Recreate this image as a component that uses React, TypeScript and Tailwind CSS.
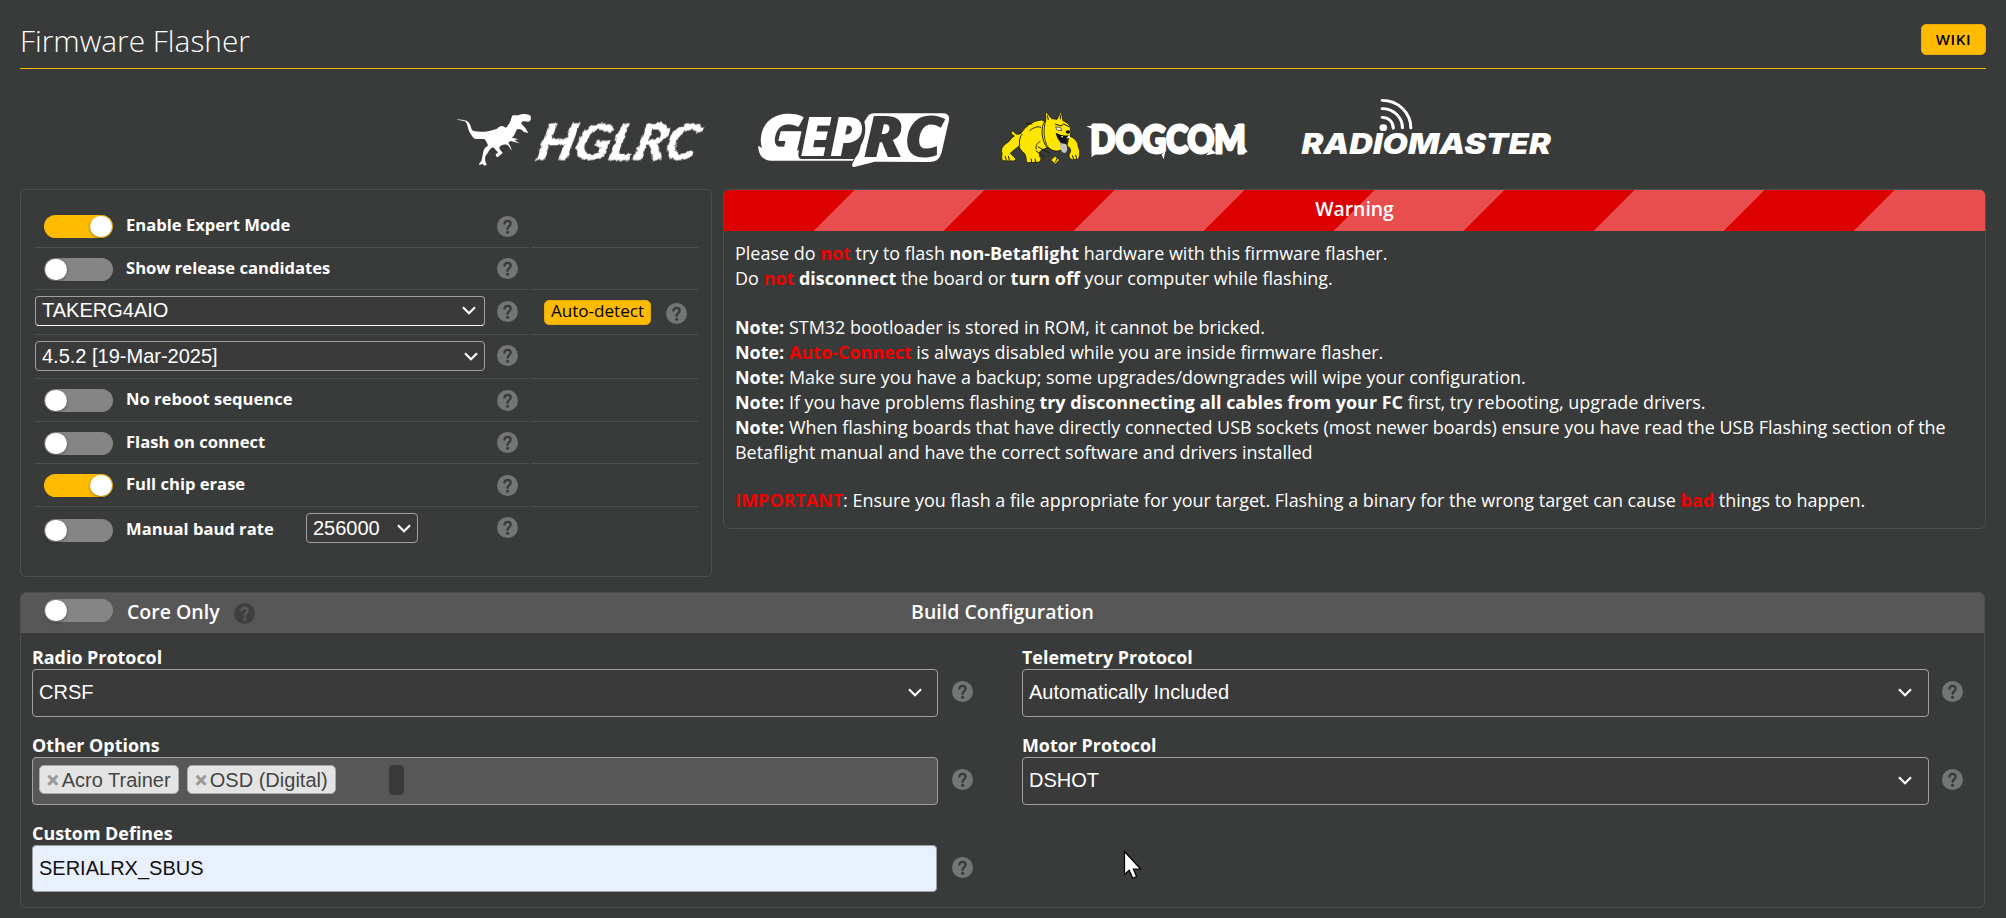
import type { ReactNode } from "react";

const sans = "font-['Open_Sans',sans-serif]";
const arial = "font-['Liberation_Sans',Arial,sans-serif]";

function Help({ className = "", dark = false }: { className?: string; dark?: boolean }) {
  const bg = dark ? "#3f3f3f" : "#747674";
  const fg = dark ? "#5b5b5b" : "#393b3a";
  return (
    <svg className={`h-[21px] w-[21px] shrink-0 ${className}`} viewBox="0 0 63 63">
      <circle cx="31.5" cy="31.5" r="31.5" fill={bg} />
      <path
        d="M22.5 22.5C23.5 16.5 27 14.5 31.5 14.5C37 14.5 41 18 41 23C41 30.5 31.8 30.5 31.8 38.5"
        fill="none"
        stroke={fg}
        strokeWidth="7"
        strokeLinecap="round"
      />
      <circle cx="31.8" cy="48.5" r="4.6" fill={fg} />
    </svg>
  );
}

function Toggle({ on = false, className = "" }: { on?: boolean; className?: string }) {
  return (
    <div
      className={`flex h-[23px] w-[69px] shrink-0 items-center rounded-full px-px ${
        on ? "justify-end bg-[#ffbb00]" : "justify-start bg-[#858585]"
      } ${className}`}
    >
      <div className="h-[21px] w-[22px] rounded-full bg-white shadow-[0_1px_3px_rgba(0,0,0,0.4)]" />
    </div>
  );
}

function Chevron() {
  return (
    <svg className="h-[9px] w-[14px] shrink-0" viewBox="0 0 14 9">
      <path d="M1 1.2L7 7.2L13 1.2" fill="none" stroke="#fff" strokeWidth="2.2" />
    </svg>
  );
}

function Select({ value, className = "" }: { value: string; className?: string }) {
  return (
    <div
      className={`flex items-center justify-between rounded-[4px] border border-[#a0a0a0] bg-[#3a3a3a] pl-[6px] text-[20px] leading-[24px] text-white ${arial} ${className}`}
    >
      <span>{value}</span>
      <Chevron />
    </div>
  );
}

function Row({
  height,
  last = false,
  children,
  side,
}: {
  height: string;
  last?: boolean;
  children: ReactNode;
  side?: ReactNode;
}) {
  const line = last ? "" : "border-b border-[#4d4f4e]";
  return (
    <div className={`flex gap-[3px] ${height}`}>
      <div className={`flex w-[494px] items-start ${line}`}>{children}</div>
      <div className={`flex w-[166px] items-start ${line}`}>{side}</div>
    </div>
  );
}

function ToggleRow({
  label,
  on,
  height,
  help,
}: {
  label: string;
  on?: boolean;
  height: string;
  help: string;
}) {
  return (
    <Row height={height}>
      <Toggle on={on} className="mt-[10px] ml-[9px]" />
      <span className="mt-[8px] ml-[13px] flex-1 text-[16.6px] leading-[24px] font-bold">{label}</span>
      <Help className={`mr-[11px] ${help}`} />
    </Row>
  );
}

function Field({ label, helpGap = "ml-[14px]", children }: { label: string; helpGap?: string; children: ReactNode }) {
  return (
    <div className="h-[88px]">
      <div className="h-[24px] text-[17.9px] leading-[24px] font-bold">{label}</div>
      <div className="flex items-start">
        {children}
        <Help className={`mt-[12px] ${helpGap}`} />
      </div>
    </div>
  );
}

function Tag({ children }: { children: ReactNode }) {
  return (
    <span className="flex h-[29px] items-center rounded-[5px] border border-[#aaa] bg-[#e4e4e4] pr-[7.5px] pl-[7px] text-[20px] leading-[24px] text-[#444]">
      <b className="mr-[3px] text-[#999] [-webkit-text-stroke:0.6px_#999]">×</b>
      {children}
    </span>
  );
}

function Red({ children }: { children: ReactNode }) {
  return <b className="font-bold text-[#f00000]">{children}</b>;
}

function LogoHglrc() {
  return (
    <svg className="h-[100px] w-[280px]" viewBox="0 0 813 300" preserveAspectRatio="none" fill="#fff">
      <defs>
        <filter id="brush" x="-5%" y="-10%" width="110%" height="120%">
          <feTurbulence type="fractalNoise" baseFrequency="0.09 0.05" numOctaves="2" seed="7" />
          <feDisplacementMap in="SourceGraphic" scale="14" xChannelSelector="R" yChannelSelector="G" />
        </filter>
      </defs>
      <path d="M48 104C62 103 76 104 84 113C93 126 88 134 98 138C120 144 145 138 166 131C172 124 180 121 186 125C192 130 194 128 197 121C204 114 206 104 209 93C214 89 222 93 230 90C240 85 258 86 263 93C265 101 264 107 258 110L242 109C236 111 234 114 239 119C247 127 253 135 256 144L244 141C236 131 226 129 222 135C218 146 215 152 209 158L228 163L216 165L231 175L205 168L198 173C203 180 207 187 208 197L199 183C191 176 184 179 176 183C170 187 171 191 182 203C178 209 172 211 167 217C164 216 161 211 162 208L169 202C160 195 158 188 153 187C147 190 142 197 139 203L132 213C130 222 131 230 136 239L129 242L124 237L113 240C114 232 119 232 121 225C124 212 125 202 128 193C132 186 141 184 139 180C137 174 134 168 129 162L104 162C95 161 91 149 86 142C79 126 80 107 66 107Z" />
      <text
        transform="translate(274 224) skewX(-14)"
        fontFamily="Lato, sans-serif"
        fontSize="150"
        fontWeight="700"
        fontStyle="italic"
        stroke="#fff"
        strokeWidth="3"
        textLength="464"
        lengthAdjust="spacingAndGlyphs"
        filter="url(#brush)"
      >
        HGLRC
      </text>
    </svg>
  );
}

function LogoGeprc() {
  return (
    <svg className="h-[100px] w-[220px]" viewBox="871 0 639 300" preserveAspectRatio="none">
      <path
        d="M924 182C924 212 940 227 962 227L1204 227L1210 222L1048 222C1038 219 1040 206 1042 196L960 204Z"
        fill="#fff"
      />
      <text
        transform="translate(924 212) scale(.98 1)"
        fontFamily="'Open Sans', sans-serif"
        fontSize="170"
        fontWeight="800"
        fontStyle="italic"
        fill="#fff"
        stroke="#fff"
        strokeWidth="4"
        strokeLinejoin="round"
        textLength="134"
        lengthAdjust="spacingAndGlyphs"
      >
        G
      </text>
      <text
        transform="translate(1047 213) scale(.98 1)"
        fontFamily="'Open Sans', sans-serif"
        fontSize="162"
        fontWeight="800"
        fontStyle="italic"
        fill="#fff"
        stroke="#393b3a"
        strokeWidth="9"
        paintOrder="stroke"
        textLength="184"
        lengthAdjust="spacingAndGlyphs"
      >
        EP
      </text>
      <path
        d="M1240 97Q1246 85 1262 85L1464 85Q1481 88 1478 106L1456 205Q1449 230 1424 231L1262 230C1240 236 1222 240 1203 246Q1195 247 1197 237L1206 218C1216 208 1219 196 1222 180C1235 158 1238 130 1232 110Z"
        fill="#fff"
        stroke="#393b3a"
        strokeWidth="4"
        paintOrder="stroke"
      />
      <text
        transform="translate(1230 217) scale(1.04 1)"
        fontFamily="'Open Sans', sans-serif"
        fontSize="168"
        fontWeight="800"
        fontStyle="italic"
        fill="#393b3a"
        textLength="222"
        lengthAdjust="spacingAndGlyphs"
      >
        RC
      </text>
    </svg>
  );
}

function LogoDogcom() {
  return (
    <svg className="h-[100px] w-[260px]" viewBox="0 -45 780 300" preserveAspectRatio="none">
      <g fill="#ffe600" stroke="#1c1c10" strokeWidth="2.5" strokeLinejoin="round">
        <path d="M48 95C54 92 58 94 60 99C64 104 72 104 78 100C90 82 110 62 140 60L160 70L165 140L140 150C128 158 134 170 138 176C138 182 134 187 128 187L96 188C92 180 96 172 88 160C80 154 74 146 72 138C64 146 52 152 46 160C52 168 62 172 63 180L56 183L24 182C18 178 20 168 21 160C16 146 24 136 40 126C48 118 50 112 58 108C52 106 48 100 48 95Z" />
        <path d="M222 108C238 112 250 126 250 142C256 152 255 166 250 178L232 179C222 176 220 168 224 160C230 152 226 142 216 138Z" />
        <path d="M152 62L152 34L170 56L186 58L198 33L204 62C218 68 228 78 226 90C230 96 226 108 220 112L204 118L196 128L202 146C190 158 172 154 160 142C146 124 144 90 152 62Z" />
        <path d="M180 169L193 180L181 192L168 180Z" strokeWidth="1.5" />
      </g>
      <path d="M182 98C194 104 210 110 222 104L216 122L212 136L200 132C192 122 184 112 182 98Z" fill="#111" />
      <path d="M196 126C202 134 208 128 214 134C218 144 218 154 210 159C202 160 198 152 196 144Z" fill="#c4c4c4" />
      <path d="M182 80L198 84L200 92L186 90Z" fill="#fff" stroke="#222" strokeWidth="2" />
      <path d="M198 108L204 108L202 114ZM214 116L222 104L226 112Z" fill="#fff" />
      <ellipse cx="219" cy="96" rx="7" ry="5" fill="#111" />
      <path
        d="M150 64C136 80 138 120 158 146M82 102C74 110 72 124 74 138M104 92C116 82 128 78 138 82M124 148C120 136 128 128 136 124M128 140L164 160M122 152L150 172M180 72L198 78L206 72L222 80M157 46L160 60M196 44L196 58M186 175L181 187M30 168L34 180M40 168L43 180M108 176L110 187M120 176L122 187M232 166L236 178M242 164L245 177M92 70L112 72"
        fill="none"
        stroke="#1c1c10"
        strokeWidth="3"
      />
      <g fill="#fff">
        <path d="M274 79L312 74L314 88L298 90Z" />
        <path d="M289 172L294 146L312 156Z" />
        <path d="M500 164L512 150L506 178Z" />
        <path d="M652 86L676 74L674 92Z" />
        <path d="M716 76L745 71L736 90Z" />
        <path d="M634 166L648 146L664 160Z" />
        <path d="M730 164L748 140L758 156Z" />
      </g>
      <text
        transform="translate(286 159) scale(.9 1)"
        fontFamily="Lato, sans-serif"
        fontSize="115"
        fontWeight="900"
        fill="#fff"
        stroke="#fff"
        strokeWidth="9"
        strokeLinejoin="round"
        textLength="518"
        lengthAdjust="spacingAndGlyphs"
      >
        DOGCOM
      </text>
    </svg>
  );
}

function LogoRadiomaster() {
  return (
    <svg className="h-[100px] w-[270px]" viewBox="810 0 706 300" preserveAspectRatio="none">
      <g fill="none" stroke="#fff" strokeWidth="8" strokeLinecap="round">
        <path d="M1051 46C1092 46 1126 82 1126 129" />
        <path d="M1051 71C1080 71 1104 96 1104 129" />
        <path d="M1051 97C1068 97 1080 110 1080 130" />
      </g>
      <circle cx="1054" cy="128" r="10" fill="#fff" />
      <text
        x="840"
        y="206"
        fontFamily="Inter, sans-serif"
        fontSize="85"
        fontWeight="900"
        fontStyle="italic"
        fill="#fff"
        textLength="652"
        lengthAdjust="spacingAndGlyphs"
      >
        RADIOMASTER
      </text>
    </svg>
  );
}

export default function App() {
  return (
    <div className={`relative h-[918px] w-[2006px] overflow-hidden bg-[#393b3a] pr-[20px] pl-[20px] text-white ${sans}`}>
      <header className="flex h-[69px] items-start justify-between border-b border-[#ffbb00]">
        <h1 className="mt-[20px] text-[29.85px] leading-[42px] font-light">Firmware Flasher</h1>
        <button className="mt-[24px] flex h-[31px] w-[65px] items-center justify-center rounded-[5px] border border-[#e8ac08] bg-[#ffbb00] pb-[1px] text-[15px] leading-[20px] font-semibold tracking-[0.6px] text-black">
          WIKI
        </button>
      </header>

      <div className="mt-[16px] flex h-[100px]">
        <div className="ml-[420px]">
          <LogoHglrc />
        </div>
        <div className="ml-[20px]">
          <LogoGeprc />
        </div>
        <div className="ml-[35px]">
          <LogoDogcom />
        </div>
        <div className="ml-[35px]">
          <LogoRadiomaster />
        </div>
      </div>

      <div className="mt-[4px] flex items-start gap-[11px]">
        <section className="h-[388px] w-[692px] rounded-[6px] border border-[#4d4f4e] pt-[15px] pl-[14px]">
          <ToggleRow label="Enable Expert Mode" on height="h-[43px]" help="mt-[11px]" />
          <ToggleRow label="Show release candidates" height="h-[42px]" help="mt-[10px]" />
          <Row
            height="h-[45px]"
            side={
              <>
                <button className="mt-[10px] ml-[12px] flex h-[25px] w-[107px] items-center justify-center rounded-[5px] border border-[#e8ac08] bg-[#ffbb00] pb-[4px] text-[17.1px] leading-[20px] text-black">
                  Auto-detect
                </button>
                <Help className="mt-[13px] ml-[15px]" />
              </>
            }
          >
            <Select value="TAKERG4AIO" className="mt-[6px] h-[30px] w-[450px] border-b-white pr-[8px] pb-[2px]" />
            <Help className="mt-[11px] ml-[12px]" />
          </Row>
          <Row height="h-[44px]">
            <Select value="4.5.2 [19-Mar-2025]" className="mt-[6px] h-[30px] w-[450px] pr-[6px]" />
            <Help className="mt-[10px] ml-[12px]" />
          </Row>
          <ToggleRow label="No reboot sequence" height="h-[43px]" help="mt-[11px]" />
          <ToggleRow label="Flash on connect" height="h-[42px]" help="mt-[10px]" />
          <ToggleRow label="Full chip erase" on height="h-[43px]" help="mt-[11px]" />
          <Row height="h-[45px]" last>
            <Toggle className="mt-[12px] ml-[9px]" />
            <span className="mt-[10px] ml-[13px] w-[180px] text-[16.6px] leading-[24px] font-bold">Manual baud rate</span>
            <Select value="256000" className="mt-[6px] h-[30px] w-[112px] pr-[6px]" />
            <Help className="mt-[10px] ml-[79px]" />
          </Row>
        </section>

        <section className="h-[340px] w-[1263px] overflow-hidden rounded-[6px] border border-[#4d4f4e]">
          <div className="flex h-[41px] items-center justify-center bg-[repeating-linear-gradient(135deg,#dc0000_0px,#dc0000_92px,#e84e4e_92px,#e84e4e_184px)] pb-[4px] text-[19.4px] leading-[26px] font-semibold">
            Warning
          </div>
          <div className="pt-[10px] pl-[11px] text-[17.97px] leading-[25px]">
            <p>
              Please do <Red>not</Red> try to flash <b>non-Betaflight</b> hardware with this firmware flasher.
            </p>
            <p>
              Do <Red>not</Red> <b>disconnect</b> the board or <b>turn off</b> your computer while flashing.
            </p>
            <p className="mt-[24px]">
              <b>Note:</b> STM32 bootloader is stored in ROM, it cannot be bricked.
            </p>
            <p>
              <b>Note:</b> <Red>Auto-Connect</Red> is always disabled while you are inside firmware flasher.
            </p>
            <p>
              <b>Note:</b> Make sure you have a backup; some upgrades/downgrades will wipe your configuration.
            </p>
            <p>
              <b>Note:</b> If you have problems flashing <b>try disconnecting all cables from your FC</b> first, try
              rebooting, upgrade drivers.
            </p>
            <p>
              <b>Note:</b> When flashing boards that have directly connected USB sockets (most newer boards) ensure you
              have read the USB Flashing section of the
              <br />
              Betaflight manual and have the correct software and drivers installed
            </p>
            <p className="mt-[23px]">
              <Red>IMPORTANT</Red>: Ensure you flash a file appropriate for your target. Flashing a binary for the wrong
              target can cause <Red>bad</Red> things to happen.
            </p>
          </div>
        </section>
      </div>

      <section className="mt-[15px] h-[316px] w-[1965px] overflow-hidden rounded-[6px] border border-[#4d4f4e]">
        <div className="grid h-[40px] grid-cols-[1fr_auto_1fr] items-start bg-[#575757]">
          <div className="flex items-start">
            <Toggle className="mt-[6px] ml-[23px]" />
            <span className="mt-[6px] ml-[14px] text-[19.5px] leading-[26px] font-semibold">Core Only</span>
            <Help dark className="mt-[10px] ml-[14px]" />
          </div>
          <span className="mt-[6px] text-[19.5px] leading-[26px] font-semibold">Build Configuration</span>
        </div>
        <div className="flex pt-[12px] pl-[11px]">
          <div className="w-[990px]">
            <Field label="Radio Protocol">
              <Select value="CRSF" className="h-[48px] w-[906px] pr-[15px] pb-[2px]" />
            </Field>
            <Field label="Other Options">
              <div
                className={`flex h-[48px] w-[906px] items-start gap-[8px] rounded-[4px] border border-[#a0a0a0] bg-[#575757] pt-[7px] pl-[6px] ${arial}`}
              >
                <Tag>Acro Trainer</Tag>
                <Tag>OSD (Digital)</Tag>
                <span className="ml-[45px] h-[30px] w-[15px] rounded-[4px] bg-[#3a3a3a]" />
              </div>
            </Field>
            <Field label="Custom Defines" helpGap="ml-[15px]">
              <div
                className={`flex h-[47px] w-[905px] items-center rounded-[4px] border border-[#a0a0a0] bg-[#e8f0fe] pb-[1px] pl-[6px] text-[20px] leading-[24px] text-[#111] ${arial}`}
              >
                SERIALRX_SBUS
              </div>
            </Field>
          </div>
          <div>
            <Field label="Telemetry Protocol" helpGap="ml-[13px]">
              <Select value="Automatically Included" className="h-[48px] w-[907px] pr-[16px] pb-[2px]" />
            </Field>
            <Field label="Motor Protocol" helpGap="ml-[13px]">
              <Select value="DSHOT" className="h-[48px] w-[907px] pr-[16px] pb-[2px]" />
            </Field>
          </div>
        </div>
      </section>

      <svg className="absolute top-[850px] left-[1123px] h-[30px] w-[19px]" viewBox="0 0 19 30">
        <path
          d="M1.5 1.5V24.5L6.2 20.3L9.8 28.2L13.6 26.6L10.3 19H17.6Z"
          fill="#fff"
          stroke="#000"
          strokeWidth="1.2"
        />
      </svg>
    </div>
  );
}
